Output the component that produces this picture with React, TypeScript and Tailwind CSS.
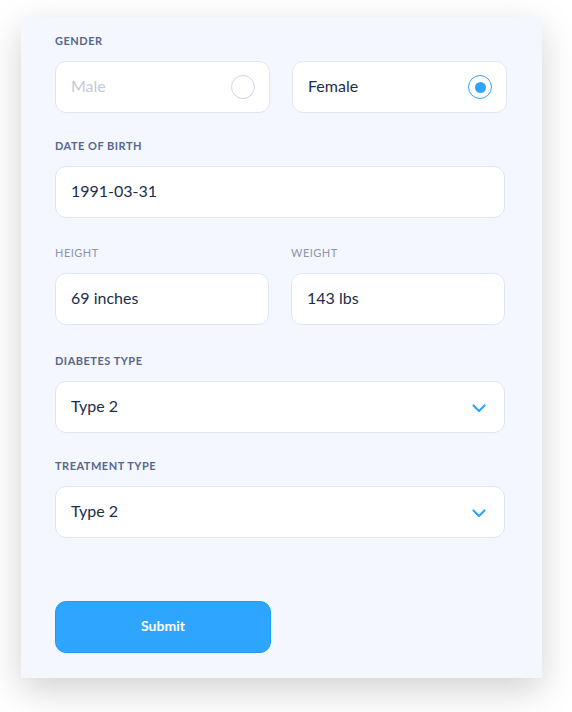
import React from "react";

const font = { fontFamily: "Lato, 'Open Sans', sans-serif" };

function Label({ children, light }: { children: React.ReactNode; light?: boolean }) {
  return (
    <div
      className={
        "h-[12px] leading-[12px] text-[11px] uppercase tracking-[0.5px] mb-[14px] " +
        (light ? "text-[#8b95ab] font-normal" : "text-[#56678a] font-bold")
      }
    >
      {children}
    </div>
  );
}

function Chevron() {
  return (
    <svg width="14" height="9" viewBox="0 0 14 9" fill="none">
      <path d="M1.5 1.5 L7 7 L12.5 1.5" stroke="#2ea6ff" strokeWidth="2.2" strokeLinecap="round" strokeLinejoin="round" />
    </svg>
  );
}

export default function App() {
  return (
    <div className="w-[572px] h-[712px] bg-white pt-[17px] pl-[21px]" style={font}>
      <div className="w-[521px] h-[661px] bg-[#f4f7fe] shadow-[0_12px_34px_rgba(0,0,0,0.18)] pt-[18px] pl-[34px]">
        <Label>Gender</Label>
        <div className="flex gap-[22px] w-[452px]">
          <div className="flex-1 h-[52px] bg-white border border-[#dfe6f3] rounded-[11px] flex items-center justify-between pl-[15px] pr-[14px] pb-[2px]">
            <span className="text-[16px] text-[#c3cad9]">Male</span>
            <span className="w-[24px] h-[24px] rounded-full border-[1.5px] border-[#cdd4e2] mt-[2px]" />
          </div>
          <div className="flex-1 h-[52px] bg-white border border-[#dfe6f3] rounded-[11px] flex items-center justify-between pl-[15px] pr-[14px] pb-[2px]">
            <span className="text-[16px] text-[#1b2e4c]">Female</span>
            <span className="w-[24px] h-[24px] rounded-full border-[1.8px] border-[#2ea6ff] flex items-center justify-center mt-[2px]">
              <span className="w-[11px] h-[11px] rounded-full bg-[#2ea6ff]" />
            </span>
          </div>
        </div>

        <div className="mt-[27px]">
          <Label>Date of birth</Label>
          <div className="w-[450px] h-[52px] bg-white border border-[#dfe6f3] rounded-[11px] flex items-center pl-[15px] pb-[2px]">
            <span className="text-[16px] text-[#1b2e4c]">1991-03-31</span>
          </div>
        </div>

        <div className="mt-[29px] flex gap-[22px] w-[450px]">
          <div className="flex-1">
            <Label light>Height</Label>
            <div className="h-[52px] bg-white border border-[#dfe6f3] rounded-[11px] flex items-center pl-[15px] pb-[2px]">
              <span className="text-[16px] text-[#1b2e4c]">69 inches</span>
            </div>
          </div>
          <div className="flex-1">
            <Label light>Weight</Label>
            <div className="h-[52px] bg-white border border-[#dfe6f3] rounded-[11px] flex items-center pl-[15px] pb-[2px]">
              <span className="text-[16px] text-[#1b2e4c]">143 lbs</span>
            </div>
          </div>
        </div>

        <div className="mt-[30px]">
          <Label>Diabetes type</Label>
          <div className="w-[450px] h-[52px] bg-white border border-[#dfe6f3] rounded-[11px] flex items-center justify-between pl-[15px] pr-[18px] pb-[2px]">
            <span className="text-[16px] text-[#1b2e4c]">Type 2</span>
            <span className="mt-[4px] flex"><Chevron /></span>
          </div>
        </div>

        <div className="mt-[27px]">
          <Label>Treatment type</Label>
          <div className="w-[450px] h-[52px] bg-white border border-[#dfe6f3] rounded-[11px] flex items-center justify-between pl-[15px] pr-[18px] pb-[2px]">
            <span className="text-[16px] text-[#1b2e4c]">Type 2</span>
            <span className="mt-[4px] flex"><Chevron /></span>
          </div>
        </div>

        <button className="mt-[63px] w-[216px] h-[52px] bg-[#2ea6ff] border border-[#1f9cf7] rounded-[11px] text-white text-[14px] font-bold flex items-center justify-center pb-[3px]">
          Submit
        </button>
      </div>
    </div>
  );
}
